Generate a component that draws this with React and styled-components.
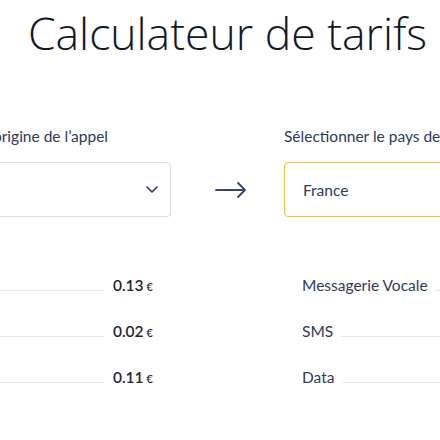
import React from 'react';
import styled, { createGlobalStyle } from 'styled-components';

// --- Données ---
const originRates = [
    { id: 'voice', label: 'Appels', price: '0.13' },
    { id: 'sms', label: 'SMS', price: '0.02' },
    { id: 'data', label: 'Data', price: '0.11' },
];

const destinationRates = [
    { id: 'voicemail', label: 'Messagerie Vocale', price: '0.00' },
    { id: 'sms', label: 'SMS', price: '0.02' },
    { id: 'data', label: 'Data', price: '0.11' },
];

const GlobalStyle = createGlobalStyle`
    html, body { margin: 0; padding: 0; background: #ffffff; overflow: hidden; }
    body { font-family: Lato, "Open Sans", sans-serif; }
`;

function Chevron() {
    return (
        <svg width="12" height="7" viewBox="0 0 12 7" fill="none">
            <path d="M1 1l5 5 5-5" stroke="#2e3b5a" strokeWidth="1.6" strokeLinecap="round" strokeLinejoin="round" />
        </svg>
    );
}

function Arrow() {
    return (
        <svg width="32" height="16" viewBox="0 0 32 16" fill="none">
            <path d="M1 8h29M23 1l7 7-7 7" stroke="#34466b" strokeWidth="1.8" strokeLinecap="round" strokeLinejoin="round" />
        </svg>
    );
}

function RateRow({ label, price }) {
    return (
        <Row>
            <RowLabel>{label}</RowLabel>
            <Leader />
            <Price>{price}<Currency>€</Currency></Price>
        </Row>
    );
}

export default function App() {
    return (
        <>
            <GlobalStyle />
            <Page>
                <Title>Calculateur de tarifs</Title>
                <Grid>
                    <Column>
                        <FieldLabel>Sélectionner le pays d’origine de l’appel</FieldLabel>
                        <Select>
                            <SelectValue>Belgique</SelectValue>
                            <Chevron />
                        </Select>
                    </Column>
                    <ArrowCell><Arrow /></ArrowCell>
                    <Column>
                        <FieldLabel>Sélectionner le pays de destination</FieldLabel>
                        <Select $active>
                            <SelectValue>France</SelectValue>
                            <Chevron />
                        </Select>
                    </Column>
                </Grid>
                <Grid $rows>
                    <RateList>
                        {originRates.map(r => <RateRow key={r.id} {...r} />)}
                    </RateList>
                    <div />
                    <RateList>
                        {destinationRates.map(r => <RateRow key={r.id} {...r} />)}
                    </RateList>
                </Grid>
            </Page>
        </>
    );
}

// --- Styles ---
const Page = styled.div`
    width: 771px;
    margin-left: -158px;
    padding-top: 5px;
`;

const Title = styled.h1`
    margin: 0;
    text-align: center;
    font-family: "Open Sans", sans-serif;
    font-weight: 300;
    font-size: 44.5px;
    line-height: 56px;
    color: #111827;
`;

const Grid = styled.div`
    display: grid;
    grid-template-columns: 329px 113px 329px;
    margin-top: ${({ $rows }) => ($rows ? '59px' : '65px')};
`;

const Column = styled.div`
    display: flex;
    flex-direction: column;
`;

const FieldLabel = styled.label`
    font-size: 15.5px;
    line-height: 20px;
    color: #2e3b5a;
    white-space: nowrap;
    margin-bottom: 16px;
`;

const Select = styled.div`
    box-sizing: border-box;
    height: 55px;
    display: flex;
    align-items: center;
    justify-content: space-between;
    padding: 0 12px 0 18px;
    border: 1px solid ${({ $active }) => ($active ? '#f3c13a' : '#dcdde0')};
    border-radius: 4px;
    background: #fff;
`;

const SelectValue = styled.span`
    font-size: 15.5px;
    color: #2e3b5a;
`;

const ArrowCell = styled.div`
    display: flex;
    align-items: center;
    justify-content: center;
    padding: 36px 0 0 7px;
`;

const RateList = styled.div`
    display: flex;
    flex-direction: column;
    padding: 0 18px;
`;

const Row = styled.div`
    display: flex;
    align-items: baseline;
    height: 46px;
`;

const RowLabel = styled.span`
    font-size: 15.5px;
    color: #2e3b5a;
    white-space: nowrap;
`;

const Leader = styled.div`
    flex: 1;
    height: 0;
    border-bottom: 1px solid #e6e7ea;
    margin: 0 9px 0 8px;
`;

const Price = styled.span`
    font-size: 15.5px;
    font-weight: 600;
    color: #1f2533;
    white-space: nowrap;
`;

const Currency = styled.span`
    font-size: 11px;
    margin-left: 3px;
`;
